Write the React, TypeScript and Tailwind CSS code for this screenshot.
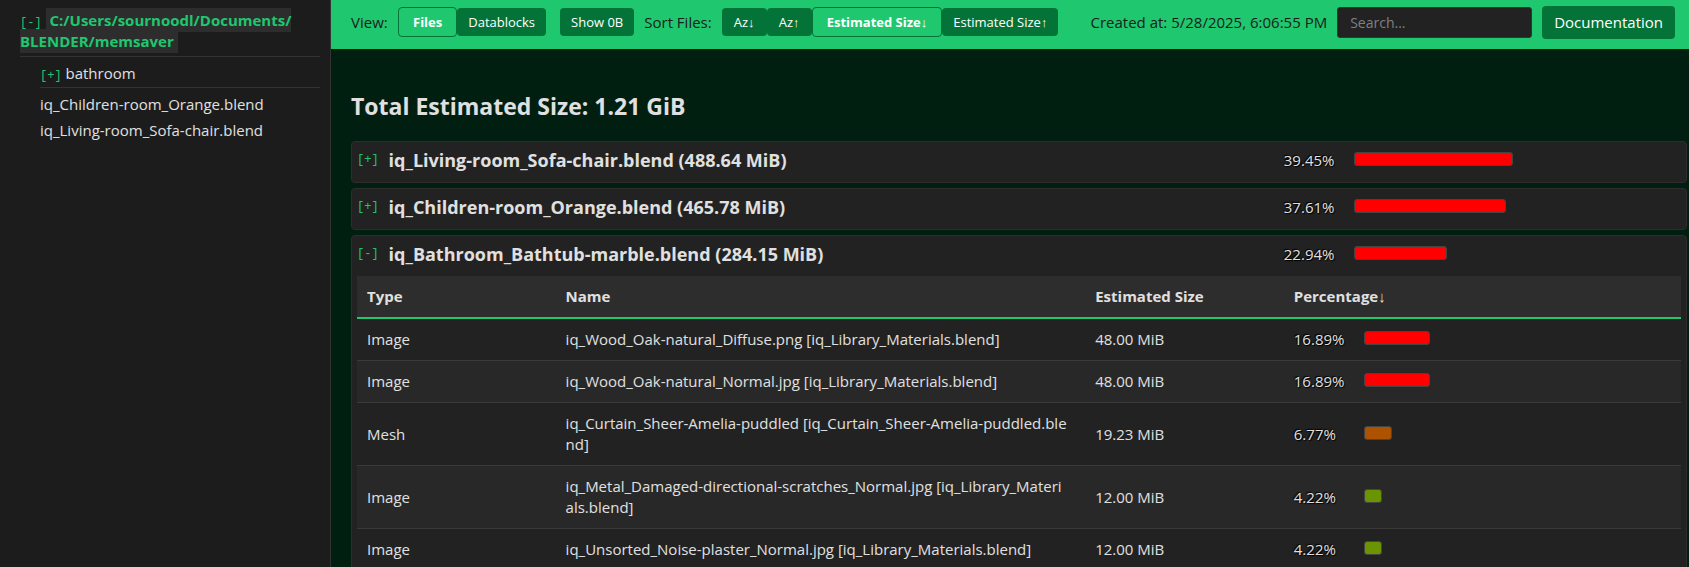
import { useState } from "react";
import type { ReactNode } from "react";

type Block = { type: string; name: string; size: string; percent: number; color: string };
type BlendFile = { name: string; size: string; percent: number; blocks: Block[] };

const bathroomBlocks: Block[] = [
  { type: "Image", name: "iq_Wood_Oak-natural_Diffuse.png [iq_Library_Materials.blend]", size: "48.00 MiB", percent: 16.89, color: "bg-[#ff0000]" },
  { type: "Image", name: "iq_Wood_Oak-natural_Normal.jpg [iq_Library_Materials.blend]", size: "48.00 MiB", percent: 16.89, color: "bg-[#ff0000]" },
  { type: "Mesh", name: "iq_Curtain_Sheer-Amelia-puddled [iq_Curtain_Sheer-Amelia-puddled.blend]", size: "19.23 MiB", percent: 6.77, color: "bg-[#ad5200]" },
  { type: "Image", name: "iq_Metal_Damaged-directional-scratches_Normal.jpg [iq_Library_Materials.blend]", size: "12.00 MiB", percent: 4.22, color: "bg-[#6b9400]" },
  { type: "Image", name: "iq_Unsorted_Noise-plaster_Normal.jpg [iq_Library_Materials.blend]", size: "12.00 MiB", percent: 4.22, color: "bg-[#6b9400]" },
];

const files: BlendFile[] = [
  { name: "iq_Living-room_Sofa-chair.blend", size: "488.64 MiB", percent: 39.45, blocks: [] },
  { name: "iq_Children-room_Orange.blend", size: "465.78 MiB", percent: 37.61, blocks: [] },
  { name: "iq_Bathroom_Bathtub-marble.blend", size: "284.15 MiB", percent: 22.94, blocks: bathroomBlocks },
];

const mono = "font-['Liberation_Mono',monospace] text-xs leading-none text-[#1fc76f]";

function ToolButton({ active = false, onClick, children }: { active?: boolean; onClick?: () => void; children: ReactNode }) {
  return (
    <button
      type="button"
      onClick={onClick}
      className={
        active
          ? "h-[30px] cursor-pointer rounded border border-[#047338] bg-[#1fc76f] px-[14px] text-[13px] font-bold whitespace-nowrap text-white"
          : "h-7 min-w-[45px] cursor-pointer rounded bg-[#047338] px-[11px] text-[13px] font-medium whitespace-nowrap text-white"
      }
    >
      {children}
    </button>
  );
}

function Meter({ percent, color, scale }: { percent: number; color: string; scale: number }) {
  return (
    <div className="flex items-center">
      <span className="w-[70px] shrink-0 [text-shadow:1px_1px_1px_#000,-1px_-1px_1px_#000]">{percent.toFixed(2)}%</span>
      <div
        className={`mb-[3px] box-content h-3 rounded-[3px] border border-[#444444] bg-clip-border ${color}`}
        style={{ width: `${Math.round(percent * scale)}px` }}
      />
    </div>
  );
}

function BlockTable({ blocks }: { blocks: Block[] }) {
  return (
    <table className="w-full table-fixed border-collapse text-left">
      <thead>
        <tr className="h-[42px] border-b-2 border-[#1fc76f] bg-[#2d2d2d]">
          <th className="w-[15%] px-[10px]">Type</th>
          <th className="w-[40%] px-[10px]">Name</th>
          <th className="w-[15%] px-[10px]">Estimated Size</th>
          <th className="w-[30%] px-[10px]">Percentage↓</th>
        </tr>
      </thead>
      <tbody>
        {blocks.map((b) => (
          <tr key={b.name} className="border-b border-[#3a3a3a] even:bg-[#282828]">
            <td className="px-[10px] py-[10px]">{b.type}</td>
            <td className="py-[10px] pr-4 pl-[10px] break-all">{b.name}</td>
            <td className="px-[10px] py-[10px]">{b.size}</td>
            <td className="px-[10px] py-[10px]">
              <Meter percent={b.percent} color={b.color} scale={3.8} />
            </td>
          </tr>
        ))}
      </tbody>
    </table>
  );
}

function FileCard({ file }: { file: BlendFile }) {
  const [open, setOpen] = useState(file.blocks.length > 0);
  return (
    <section className="rounded border border-[#2d2d2d] bg-[#222222] px-[5px]">
      <div className="grid h-10 grid-cols-[70%_30%] items-center pb-1">
        <div className="flex items-center gap-[10px]">
          <button type="button" aria-expanded={open} onClick={() => setOpen(!open)} className={`cursor-pointer ${mono}`}>
            {open ? "[-]" : "[+]"}
          </button>
          <h2 className="text-lg leading-6 font-bold">
            {file.name} ({file.size})
          </h2>
        </div>
        <Meter percent={file.percent} color="bg-[#ff0000]" scale={3.98} />
      </div>
      {open && <BlockTable blocks={file.blocks} />}
    </section>
  );
}

export default function App() {
  const [view, setView] = useState("files");
  const [sort, setSort] = useState("size-desc");
  return (
    <div className="flex h-screen overflow-hidden bg-[#001f10] font-['Open_Sans','Liberation_Sans',sans-serif] text-[15px] leading-[21px] text-[#e0e0e0]">
      <nav className="w-[331px] shrink-0 border-r border-[#333333] bg-[#1c1c1c] pt-[10px] pr-[10px] pl-5">
        <div className="border-b border-[#333333] pb-1">
          <button type="button" className={`cursor-pointer ${mono}`}>[-]</button>{" "}
          <a href="#memsaver" className="bg-[#2d2d2d] px-1 py-[2px] font-bold text-[#1fc76f]">
            C:/Users/sournoodl/Documents/<wbr />BLENDER/memsaver
          </a>
        </div>
        <div className="ml-5 border-b border-[#333333] pt-[6px] pb-[3px]">
          <button type="button" className={`cursor-pointer ${mono}`}>[+]</button>{" "}
          <a href="#bathroom">bathroom</a>
        </div>
        <ul className="ml-5 flex flex-col gap-[5px] pt-[6px]">
          <li><a href="#children-room">iq_Children-room_Orange.blend</a></li>
          <li><a href="#living-room">iq_Living-room_Sofa-chair.blend</a></li>
        </ul>
      </nav>
      <div className="flex min-w-0 flex-1 flex-col">
        <header className="flex h-[49px] shrink-0 items-center bg-[#1fc76f] pr-[14px] pb-[5px] pl-5 whitespace-nowrap text-[#1c1c1c]">
          <span className="w-[47px]">View:</span>
          <ToolButton active={view === "files"} onClick={() => setView("files")}>Files</ToolButton>
          <ToolButton active={view === "datablocks"} onClick={() => setView("datablocks")}>Datablocks</ToolButton>
          <div className="mr-[10px] ml-[14px] flex">
            <ToolButton>Show 0B</ToolButton>
          </div>
          <span className="mr-[10px]">Sort Files:</span>
          <ToolButton active={sort === "name-desc"} onClick={() => setSort("name-desc")}>Az↓</ToolButton>
          <ToolButton active={sort === "name-asc"} onClick={() => setSort("name-asc")}>Az↑</ToolButton>
          <ToolButton active={sort === "size-desc"} onClick={() => setSort("size-desc")}>Estimated Size↓</ToolButton>
          <ToolButton active={sort === "size-asc"} onClick={() => setSort("size-asc")}>Estimated Size↑</ToolButton>
          <div className="ml-auto flex items-center gap-[10px]">
            <span>Created at: 5/28/2025, 6:06:55 PM</span>
            <input
              type="search"
              aria-label="Search"
              placeholder="Search..."
              className="h-[31px] w-[195px] rounded-[3px] border border-[#333333] bg-[#222222] px-3 text-sm text-[#e0e0e0] placeholder:text-[#808080]"
            />
            <a href="#documentation" className="flex h-[33px] items-center rounded bg-[#047338] px-3 text-white">
              Documentation
            </a>
          </div>
        </header>
        <main className="flex-1 overflow-y-auto pt-10 pr-[2px] pl-5 [scrollbar-width:none]">
          <h1 className="mb-[18px] text-[23px] leading-[34px] font-bold">Total Estimated Size: 1.21 GiB</h1>
          <div className="flex flex-col gap-[5px]">
            {files.map((f) => (
              <FileCard key={f.name} file={f} />
            ))}
          </div>
        </main>
      </div>
    </div>
  );
}
